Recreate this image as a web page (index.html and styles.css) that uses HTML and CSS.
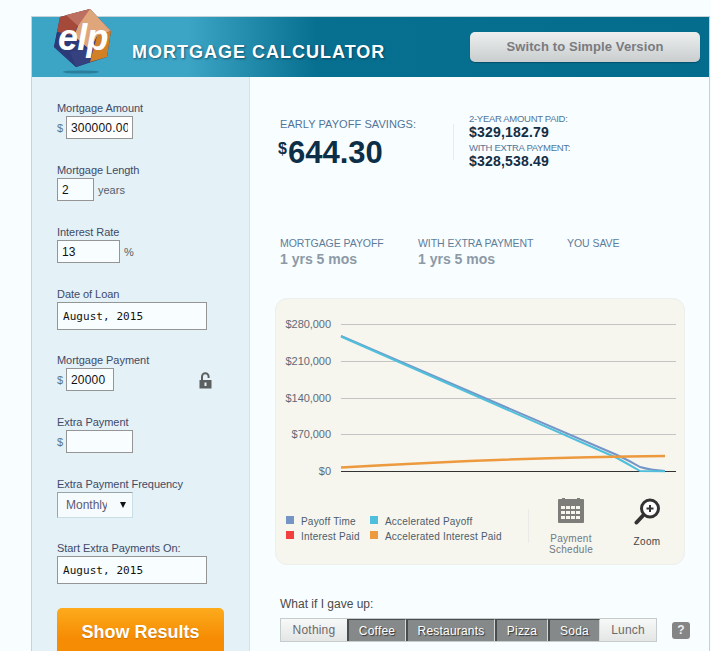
FILE: index.html
```html
<!DOCTYPE html>
<html lang="en">
<head>
<meta charset="utf-8">
<title>Mortgage Calculator</title>
<link rel="stylesheet" href="styles.css">
</head>
<body>
<div class="page">
  <div class="app">
    <header class="header">
      <svg class="logo" width="70" height="70" viewBox="50 6 70 70" aria-label="elp logo">
        <ellipse cx="81" cy="72" rx="18" ry="1.6" fill="#2b7f9c"/>
        <polygon points="90,9 111,31 107,57 76,67 54,47 60,17" fill="#2c3a78"/>
        <polygon points="60,17 90,9 78,24 74,36 57,32" fill="#a5493a"/>
        <polygon points="66,15 90,9 99,19 78,26" fill="#bd6f60"/>
        <polygon points="90,9 111,31 97,36 90,50 74,36 78,26" fill="#dfa67c"/>
        <polygon points="111,31 107,57 90,62 97,36" fill="#d28026"/>
        <polygon points="54,47 57,32 74,36 90,50 90,62 76,67" fill="#2c3a78"/>
        <polygon points="70,52 88,48 90,62 76,67" fill="#36417f"/>
        <text x="58" y="50" class="logo-text">elp</text>
      </svg>
      <h1 class="title">MORTGAGE CALCULATOR</h1>
      <button class="switch" type="button">Switch to Simple Version</button>
    </header>
    <div class="body">
      <aside class="sidebar">
        <div class="field">
          <label class="label">Mortgage Amount</label>
          <div class="row"><span class="unit">$</span><input class="input w66" value="300000.00"></div>
        </div>
        <div class="field">
          <label class="label">Mortgage Length</label>
          <div class="row"><input class="input w36" value="2"><span class="suffix">years</span></div>
        </div>
        <div class="field">
          <label class="label">Interest Rate</label>
          <div class="row"><input class="input w62" value="13"><span class="suffix">%</span></div>
        </div>
        <div class="field field-tall">
          <label class="label">Date of Loan</label>
          <input class="input date" value="August, 2015">
        </div>
        <div class="field">
          <label class="label">Mortgage Payment</label>
          <div class="row">
            <span class="unit">$</span><input class="input w48" value="20000">
            <svg class="lock" width="13" height="17" viewBox="0 0 13 17">
              <path d="M3 8V4.5a3.3 3.3 0 0 1 6.6 0V6" fill="none" stroke="#5c5f60" stroke-width="2"/>
              <rect x="0.5" y="8" width="12" height="8.5" fill="#5c5f60"/>
              <rect x="5.5" y="10.5" width="2" height="3.5" fill="#e4f1f6"/>
            </svg>
          </div>
        </div>
        <div class="field">
          <label class="label">Extra Payment</label>
          <div class="row"><span class="unit">$</span><input class="input w67" value=""></div>
        </div>
        <div class="field field-tall">
          <label class="label">Extra Payment Frequency</label>
          <div class="select"><span class="select-text">Monthly</span><span class="select-arrow"></span></div>
        </div>
        <div class="field field-last">
          <label class="label">Start Extra Payments On:</label>
          <input class="input date" value="August, 2015">
        </div>
        <button class="show" type="button">Show Results</button>
      </aside>
      <main class="main">
        <section class="savings">
          <div class="savings-main">
            <div class="caption">EARLY PAYOFF SAVINGS:</div>
            <div class="big"><sup class="big-cur">$</sup>644.30</div>
          </div>
          <div class="v-rule"></div>
          <div class="savings-side">
            <div class="mini">2-YEAR AMOUNT PAID:</div>
            <div class="amount">$329,182.79</div>
            <div class="mini mini-gap">WITH EXTRA PAYMENT:</div>
            <div class="amount">$328,538.49</div>
          </div>
        </section>
        <section class="stats">
          <div class="stat s1"><div class="stat-label">MORTGAGE PAYOFF</div><div class="stat-value">1 yrs 5 mos</div></div>
          <div class="stat s2"><div class="stat-label">WITH EXTRA PAYMENT</div><div class="stat-value">1 yrs 5 mos</div></div>
          <div class="stat"><div class="stat-label">YOU SAVE</div></div>
        </section>
        <section class="panel">
          <svg class="plot" width="408" height="190" viewBox="276 299 408 190">
            <g class="grid">
              <line x1="341" y1="324.5" x2="676" y2="324.5"/>
              <line x1="341" y1="361.5" x2="676" y2="361.5"/>
              <line x1="341" y1="398.5" x2="676" y2="398.5"/>
              <line x1="341" y1="434.5" x2="676" y2="434.5"/>
            </g>
            <line x1="341" y1="471.5" x2="676" y2="471.5" stroke="#333" stroke-width="1"/>
            <g class="ticks">
              <text x="331" y="328">$280,000</text>
              <text x="331" y="365">$210,000</text>
              <text x="331" y="402">$140,000</text>
              <text x="331" y="438">$70,000</text>
              <text x="331" y="475">$0</text>
            </g>
            <path d="M341 336 L617 455 Q630 461 640 467 Q650 470 665 471" fill="none" stroke="#7595c6" stroke-width="2"/>
            <path d="M341 336.5 L617 458 Q628 464 640 471 L665 471.3" fill="none" stroke="#4fbfdc" stroke-width="2"/>
            <path d="M341 467.5 Q520 457 665 456" fill="none" stroke="#ed9a3e" stroke-width="2.5"/>
          </svg>
          <div class="panel-foot">
            <div class="legend">
              <div class="legend-col">
                <div class="legend-item"><i class="sw blue"></i>Payoff Time</div>
                <div class="legend-item"><i class="sw red"></i>Interest Paid</div>
              </div>
              <div class="legend-col">
                <div class="legend-item"><i class="sw cyan"></i>Accelerated Payoff</div>
                <div class="legend-item"><i class="sw orange"></i>Accelerated Interest Paid</div>
              </div>
            </div>
            <div class="v-rule foot-rule"></div>
            <div class="tool tool-a">
              <svg width="26" height="25" viewBox="0 0 26 25">
                <rect x="0" y="1" width="26" height="24" rx="1" fill="#7d7e7a"/>
                <rect x="4" y="0" width="3" height="3" fill="#7d7e7a"/><rect x="19" y="0" width="3" height="3" fill="#7d7e7a"/>
                <g fill="#f6f5ee">
                  <rect x="3" y="8" width="4" height="3"/><rect x="8" y="8" width="4" height="3"/><rect x="13" y="8" width="4" height="3"/><rect x="18" y="8" width="4" height="3"/>
                  <rect x="3" y="13" width="4" height="3"/><rect x="8" y="13" width="4" height="3"/><rect x="13" y="13" width="4" height="3"/><rect x="18" y="13" width="4" height="3"/>
                  <rect x="3" y="18" width="4" height="3"/><rect x="8" y="18" width="4" height="3"/><rect x="13" y="18" width="4" height="3"/><rect x="18" y="18" width="4" height="3"/>
                </g>
              </svg>
              <div class="tool-text">Payment<br>Schedule</div>
            </div>
            <div class="tool tool-b">
              <svg width="27" height="27" viewBox="0 0 27 27">
                <circle cx="16" cy="10.5" r="8.5" fill="#fff" stroke="#333" stroke-width="3"/>
                <path d="M9.5 17 L2.5 24.5" stroke="#333" stroke-width="4" stroke-linecap="round"/>
                <path d="M16 7v7M12.5 10.5h7" stroke="#333" stroke-width="2"/>
              </svg>
              <div class="tool-text zoom-text">Zoom</div>
            </div>
          </div>
        </section>
        <section class="giveup">
          <div class="giveup-label">What if I gave up:</div>
          <div class="giveup-row">
            <div class="seg-group">
              <button class="seg seg-nothing" type="button">Nothing</button>
              <button class="seg on seg-coffee" type="button">Coffee</button>
              <button class="seg on seg-rest" type="button">Restaurants</button>
              <button class="seg on seg-pizza" type="button">Pizza</button>
              <button class="seg on seg-soda" type="button">Soda</button>
              <button class="seg seg-lunch" type="button">Lunch</button>
            </div>
            <span class="help">?</span>
          </div>
        </section>
      </main>
    </div>
  </div>
</div>
</body>
</html>
```
FILE: styles.css
```css
* { box-sizing: border-box; }
html, body { margin: 0; padding: 0; background: #f8fdff; }
body { font-family: "Liberation Sans", Arial, sans-serif; }
.page { width: 711px; height: 651px; overflow: hidden; padding: 16px 0 0 31px; }
.app { width: 679px; height: 700px; border: 1px solid #c5d2d8; border-bottom: 0; }

.header { position: relative; height: 60px; display: flex; align-items: center; justify-content: space-between; padding: 0 9px 0 100px; background: linear-gradient(90deg, #3ca4c5 0, #3ca4c5 23%, #076f90 42%, #046c8d 100%); }
.logo { position: absolute; left: 18px; top: -11px; }
.logo-text { font: italic bold 36px "Liberation Sans", Arial, sans-serif; fill: #fff; letter-spacing: -.8px; }
.title { margin: 11px 0 0; font-size: 18px; font-weight: 700; letter-spacing: 1px; color: #fff; text-shadow: 1px 1px 2px rgba(0,40,60,.6); }
.switch { width: 230px; height: 30px; margin-top: -1px; border: 0; border-radius: 5px; background: linear-gradient(#edefef, #c9cdcd); color: #7a7a80; font: bold 13px "Liberation Sans", Arial, sans-serif; letter-spacing: .1px; box-shadow: 0 1px 1px rgba(0,40,60,.4); }

.body { display: flex; height: 640px; }
.sidebar { width: 218px; background: #e4f1f6; border-right: 1px solid #d3e2e8; padding: 23px 0 0 25px; }
.field { margin-bottom: 23px; }
.field-tall { margin-bottom: 22px; }
.field-last { margin-bottom: 24px; }
.label { display: block; height: 16px; font-size: 11px; line-height: 16px; letter-spacing: -.05px; color: #3f4a66; }
.row { display: flex; align-items: center; height: 23px; }
.unit { width: 9px; font-size: 11px; color: #5f7385; }
.suffix { margin-left: 4px; font-size: 11px; color: #55606a; }
.input { display: block; height: 23px; padding: 0 4px; border: 1px solid #959595; border-radius: 0; background: #f8fdff; color: #111; font: 12px "Liberation Sans", Arial, sans-serif; letter-spacing: .2px; outline: 0; }
.w66 { width: 67px; background: #fff; }
.w36 { width: 37px; }
.w62 { width: 63px; }
.w48 { width: 48px; }
.w67 { width: 67px; }
.date { width: 150px; height: 28px; padding: 0 5px; font: 11px "DejaVu Sans Mono", monospace; letter-spacing: .05px; }
.lock { margin-left: 85px; margin-top: 1px; }
.select { display: flex; align-items: center; width: 76px; height: 26px; padding-left: 8px; background: #f6fbfd; border: 1px solid #c9dde5; border-left-color: #9aa5aa; border-top-color: #9aa5aa; }
.select-text { width: 41px; overflow: hidden; font-size: 12px; color: #5c5a78; }
.select-arrow { width: 0; height: 0; margin-left: 13px; border: 3.5px solid transparent; border-top: 6px solid #111; border-bottom: 0; }
.show { display: block; width: 167px; height: 60px; padding: 0 0 11px; border: 0; border-radius: 5px; background: linear-gradient(#fdab1c, #f68c04 50%); color: #fff; font: bold 18px "Liberation Sans", Arial, sans-serif; text-shadow: 0 1px 1px rgba(120,60,0,.35); }

.main { flex: 1; padding: 0 0 0 25px; }
.savings { display: flex; height: 92px; padding-top: 40px; }
.savings-main { width: 175px; margin-left: 3px; }
.caption { margin-left: 2px; font-size: 11px; line-height: 14px; letter-spacing: .07px; color: #527599; }
.big { margin-top: 4px; font-size: 31px; line-height: 36px; font-weight: 700; color: #0c2f47; }
.big-cur { font-size: 16px; line-height: 0; vertical-align: 9px; margin-right: 1px; }
.v-rule { width: 1px; background: #eaeae6; }
.savings .v-rule { height: 36px; margin-top: 7px; }
.savings-side { margin: -5px 0 0 15px; }
.mini { font-size: 9.5px; line-height: 13px; letter-spacing: -.3px; color: #527599; }
.mini-gap { margin-top: 2px; }
.amount { font-size: 14px; line-height: 14px; font-weight: 700; letter-spacing: .2px; color: #122f45; }

.stats { display: flex; height: 129px; padding: 67px 0 0 5px; }
.stat { flex: none; }
.s1 { width: 138px; }
.s2 { width: 149px; }
.stat-label { font-size: 10.5px; line-height: 14px; letter-spacing: -.05px; color: #5d7c99; }
.stat-value { margin-top: 1px; font-size: 14px; line-height: 16px; font-weight: 700; color: #8b9aa6; }

.panel { width: 410px; height: 267px; border: 1px solid #edeeee; border-radius: 12px; background: #f6f5ee; }
.plot { display: block; }
.grid line { stroke: #c4c4c4; stroke-width: 1; }
.ticks text { font: 11px "Liberation Sans", Arial, sans-serif; letter-spacing: -.05px; fill: #5f6b78; text-anchor: end; }
.panel-foot { display: flex; height: 76px; padding: 20px 0 0 10px; }
.legend { display: flex; width: 242px; margin-top: 5px; height: 30px; }
.legend-col { margin-right: 12px; }
.legend-item { display: flex; align-items: center; height: 15px; font-size: 10px; letter-spacing: .2px; color: #4d5c6c; white-space: nowrap; }
.sw { width: 8px; height: 8px; margin-right: 7px; flex: none; position: relative; top: -2px; }
.legend-col:first-child { width: 72px; }
.blue { background: #7595c6; }
.red { background: #f2403f; }
.cyan { background: #4fbfdc; }
.orange { background: #ed9a3e; }
.foot-rule { height: 34px; }
.tool { display: flex; flex-direction: column; align-items: center; text-align: center; margin-top: -11px; }
.tool-a { width: 70px; margin-left: 7px; }
.tool-b { width: 60px; margin-left: 11px; }
.tool-text { margin-top: 10px; font-size: 10px; line-height: 11px; letter-spacing: .3px; color: #6f7a84; }
.zoom-text { margin-top: 11px; color: #444; }

.giveup { padding: 32px 0 0 5px; }
.giveup-label { font-size: 12px; line-height: 14px; color: #4a4a48; }
.giveup-row { display: flex; align-items: center; margin-top: 7px; }
.seg-group { display: flex; height: 24px; border: 1px solid #c6cbcc; }
.seg { height: 100%; padding: 0; border: 0; font: 12px "Liberation Sans", Arial, sans-serif; letter-spacing: .2px; background: linear-gradient(#f7f8f8, #e4e6e6); color: #6a6a6a; }
.seg.on { background: #858989; color: #fff; border-left: 2px solid #4a4d4d; border-top: 1px solid #4a4d4d; border-right: 1px solid #d5d8d8; text-shadow: 1px 1px 1px #333; }
.seg-nothing { width: 66px; }
.seg-coffee { width: 59px; }
.seg-rest { width: 89px; }
.seg-pizza { width: 53px; }
.seg-soda { width: 52px; }
.seg-lunch { width: 56px; }
.help { display: flex; align-items: center; justify-content: center; width: 18px; height: 17px; margin-left: 15px; border-radius: 3px; background: #858585; color: #eee; font-size: 12px; font-weight: 700; }
```
